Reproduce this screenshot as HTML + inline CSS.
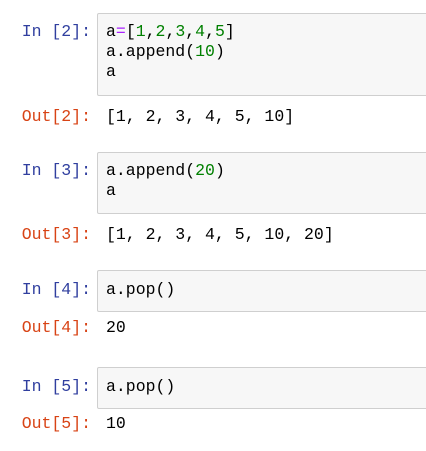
<!DOCTYPE html>
<html><head><style>
body{margin:0;width:426px;height:451px;background:#fff;position:relative;overflow:hidden;font-family:"Liberation Mono","NanumGothic",monospace;font-size:16.5px}
.l{position:absolute;right:335px;line-height:20px;white-space:pre}
.in{color:#303F9F}.out{color:#D84315}
.box{position:absolute;left:97px;width:340px;background:#f7f7f7;border:1px solid #cfcfcf;border-radius:2px;box-sizing:border-box}
.t{position:absolute;left:106px;line-height:20px;white-space:pre;color:#000}
.g{color:#008000}.p{color:#AA22FF}
</style></head><body>
<div class="l in" style="top:22px">In [2]:</div>
<div class="box" style="top:13px;height:83px"></div>
<div class="t" style="top:22px">a<span class="p">=</span>[<span class="g">1</span>,<span class="g">2</span>,<span class="g">3</span>,<span class="g">4</span>,<span class="g">5</span>]
a.append(<span class="g">10</span>)
a</div>
<div class="l out" style="top:107px">Out[2]:</div>
<div class="t" style="top:107px">[1, 2, 3, 4, 5, 10]</div>

<div class="l in" style="top:161px">In [3]:</div>
<div class="box" style="top:152px;height:62px"></div>
<div class="t" style="top:161px">a.append(<span class="g">20</span>)
a</div>
<div class="l out" style="top:225px">Out[3]:</div>
<div class="t" style="top:225px">[1, 2, 3, 4, 5, 10, 20]</div>

<div class="l in" style="top:280px">In [4]:</div>
<div class="box" style="top:270px;height:42px"></div>
<div class="t" style="top:280px">a.pop()</div>
<div class="l out" style="top:318px">Out[4]:</div>
<div class="t" style="top:318px">20</div>

<div class="l in" style="top:377px">In [5]:</div>
<div class="box" style="top:367px;height:42px"></div>
<div class="t" style="top:377px">a.pop()</div>
<div class="l out" style="top:414px">Out[5]:</div>
<div class="t" style="top:414px">10</div>
</body></html>
